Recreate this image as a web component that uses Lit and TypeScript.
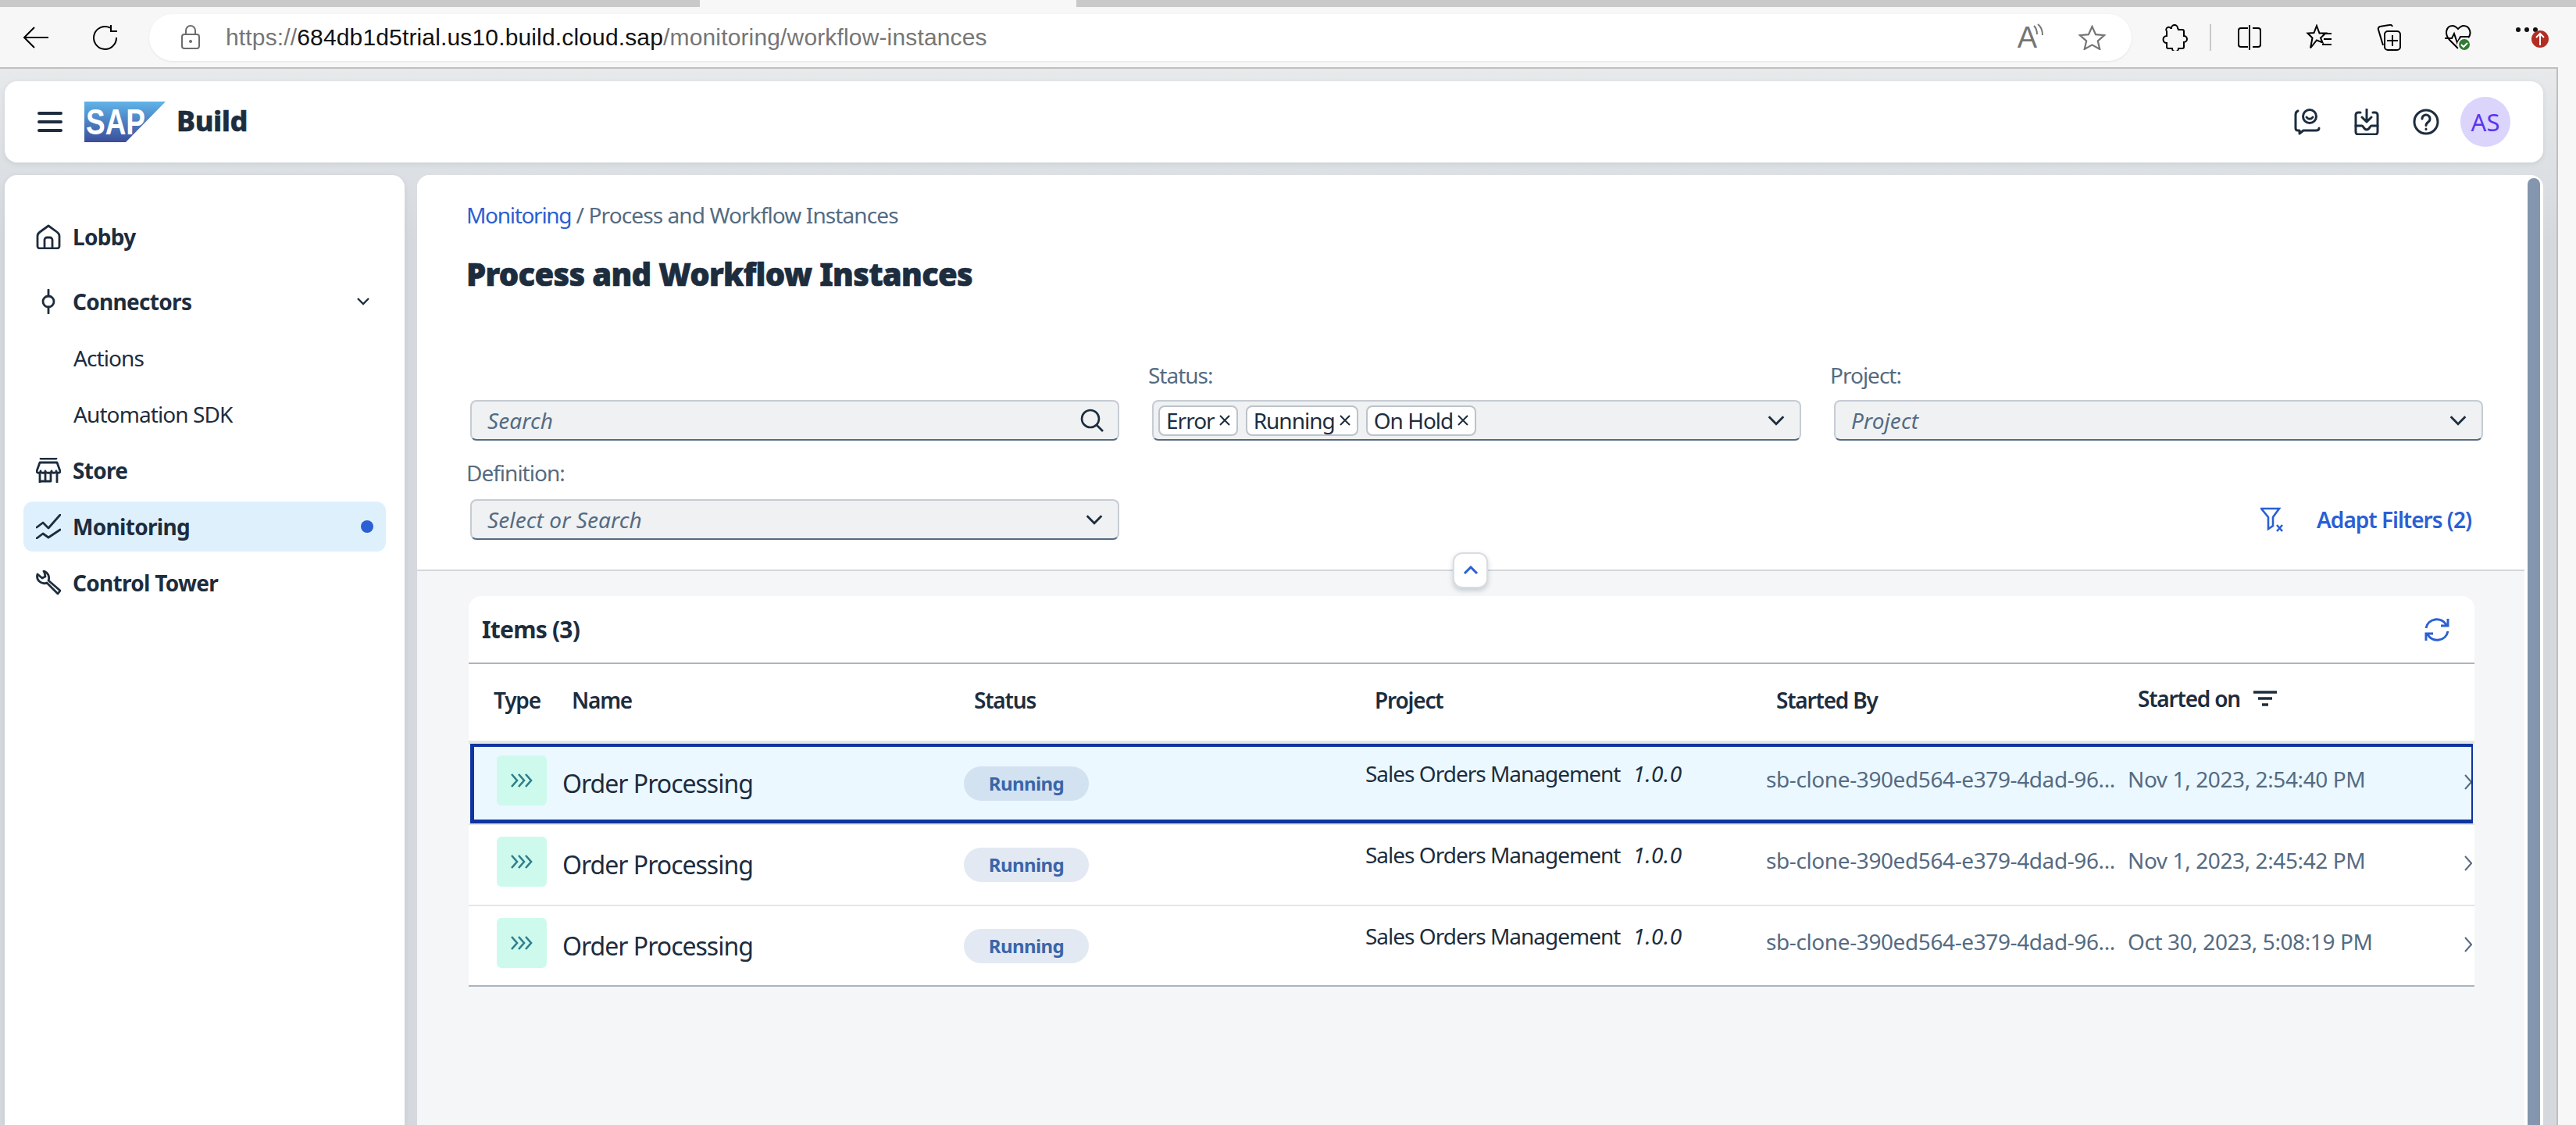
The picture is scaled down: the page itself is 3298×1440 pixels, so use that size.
import { LitElement, html, css } from 'lit';
import { customElement } from 'lit/decorators.js';

const rows = [
  { on: 'Nov 1, 2023, 2:54:40 PM', selected: true },
  { on: 'Nov 1, 2023, 2:45:42 PM', selected: false },
  { on: 'Oct 30, 2023, 5:08:19 PM', selected: false },
];

const chevronDown = html`<svg class="chev" viewBox="0 0 20 12"><path d="M2 2l8 8 8-8" /></svg>`;

@customElement('app-root')
export class AppRoot extends LitElement {
  static override styles = css`
    * {
      box-sizing: border-box;
    }
    :host {
      display: block;
      width: 3298px;
      height: 1440px;
      overflow: hidden;
      background: #f7f7f7;
      color: #1d2d3e;
      font-family: 'Noto Sans', 'Open Sans', sans-serif;
      font-size: 28px;
    }
    svg {
      display: block;
      flex: none;
      fill: none;
      stroke: currentColor;
    }

    /* browser chrome */
    .tabs {
      display: flex;
      height: 9px;
      background: #c9c9c9;
    }
    .tab-a {
      width: 896px;
      border-bottom-right-radius: 8px;
      background: #c9c9c9;
    }
    .tab-b {
      width: 482px;
      background: #f7f7f7;
    }
    .tab-c {
      flex: 1;
      border-bottom-left-radius: 8px;
      background: #c9c9c9;
    }
    .toolbar {
      display: flex;
      align-items: center;
      height: 77px;
      padding-left: 29px;
      background: #f7f7f7;
      color: #000;
    }
    .back {
      width: 34px;
      height: 28px;
      stroke-width: 2;
    }
    .reload {
      width: 33px;
      height: 33px;
      margin-left: 55px;
      stroke-width: 2;
    }
    .url {
      display: flex;
      align-items: center;
      width: 2538px;
      height: 60px;
      margin-left: 40px;
      padding-left: 41px;
      border-radius: 30px;
      background: #fff;
      box-shadow: 0 1px 3px rgba(0, 0, 0, 0.08);
      color: #767676;
    }
    .lock {
      width: 24px;
      height: 31px;
      stroke-width: 2;
      color: #6c6c6c;
    }
    .url-text {
      margin-left: 33px;
      font-family: 'Liberation Sans', sans-serif;
      font-size: 30px;
      letter-spacing: 0.15px;
      white-space: nowrap;
    }
    .url-text b {
      font-weight: 400;
      color: #111;
    }
    .read {
      display: flex;
      align-items: flex-start;
      margin-left: auto;
      color: #757575;
      font-family: 'Liberation Sans', sans-serif;
      font-size: 38px;
      line-height: 44px;
    }
    .read svg {
      width: 14px;
      height: 18px;
      margin: 4px 0 0 -6px;
      stroke-width: 2;
    }
    .star {
      width: 35px;
      height: 32px;
      margin: 0 33px 0 45px;
      stroke-width: 2.2;
      color: #757575;
    }
    .tool {
      width: 34px;
      height: 34px;
      stroke-width: 2;
    }
    .puzzle {
      margin-left: 38px;
    }
    .sep {
      width: 2px;
      height: 34px;
      margin: 0 32px 0 28px;
      background: #c9c9c9;
    }
    .gap {
      margin-left: 55px;
    }
    .more {
      width: 44px;
      height: 30px;
      margin-left: 57px;
      stroke: none;
    }
    .more circle {
      stroke: none;
    }

    /* page */
    .page {
      display: flex;
      flex-direction: column;
      gap: 16px;
      width: 3275px;
      height: 1354px;
      padding: 16px 0 0 6px;
      border-top: 2px solid #bfbfbf;
      border-right: 2px solid #bfbfbf;
      background: linear-gradient(#e7e9eb, #d5d9de 220px);
    }
    .shell {
      display: flex;
      align-items: center;
      flex: none;
      width: 3250px;
      height: 104px;
      padding: 0 42px 0 42px;
      border-radius: 16px;
      background: #fff;
      box-shadow: 0 2px 6px rgba(85, 107, 130, 0.15);
    }
    .burger {
      width: 32px;
      height: 26px;
      stroke-width: 4;
      stroke-linecap: round;
    }
    .logo {
      width: 104px;
      height: 52px;
      margin-left: 28px;
      stroke: none;
    }
    .logo text {
      fill: #fff;
      stroke: none;
      font-family: 'Liberation Sans', sans-serif;
      font-weight: 700;
      font-size: 46px;
    }
    .product {
      margin: -3px 0 0 14px;
      font-size: 36px;
      font-weight: 800;
      letter-spacing: -0.4px;
      -webkit-text-stroke: 0.5px #1d2d3e;
    }
    .shell-icon {
      width: 34px;
      height: 34px;
      stroke-width: 3;
      stroke-linecap: round;
      stroke-linejoin: round;
    }
    .push {
      margin-left: auto;
    }
    .shell-gap {
      margin-left: 42px;
    }
    .avatar {
      display: flex;
      align-items: center;
      justify-content: center;
      width: 64px;
      height: 64px;
      margin-left: 27px;
      border-radius: 50%;
      background: #dbd4fb;
      color: #5a35f0;
      font-size: 31px;
    }

    .columns {
      display: flex;
      flex: 1;
      gap: 16px;
      min-height: 0;
    }

    /* side navigation */
    .side {
      flex: none;
      width: 512px;
      padding: 47px 24px 0;
      border-radius: 16px 16px 0 0;
      background: #fff;
      box-shadow: 0 2px 6px rgba(85, 107, 130, 0.15);
    }
    .nav {
      display: flex;
      align-items: center;
      height: 64px;
      margin-bottom: 8px;
      padding-left: 16px;
      border-radius: 12px;
      font-weight: 700;
      letter-spacing: -0.7px;
    }
    .nav.first {
      margin-bottom: 19px;
    }
    .nav svg.icon {
      width: 32px;
      height: 32px;
      margin-right: 15px;
      stroke-width: 2.8;
      stroke-linecap: round;
      stroke-linejoin: round;
    }
    .nav.sub {
      padding-left: 64px;
      font-weight: 400;
      letter-spacing: -0.9px;
    }
    .nav.active {
      background: #dff0fd;
    }
    .caret {
      width: 16px;
      height: 10px;
      margin-left: auto;
      margin-right: 21px;
      stroke-width: 2.4;
    }
    .dot {
      width: 16px;
      height: 16px;
      margin-left: auto;
      margin-right: 16px;
      border-radius: 50%;
      background: #2a60d3;
    }

    /* main card */
    .main {
      position: relative;
      display: flex;
      flex: none;
      width: 2722px;
      border-radius: 16px 16px 0 0;
      background: #fff;
      overflow: hidden;
    }
    .content {
      display: flex;
      flex-direction: column;
      width: 2698px;
    }
    .gutter {
      flex: 1;
      padding: 4px 4px 0 4px;
    }
    .thumb {
      width: 16px;
      height: 100%;
      border-radius: 8px 8px 0 0;
      background: #8496ad;
    }
    .head {
      position: relative;
      padding: 31px 0 38px 63px;
      border-bottom: 2px solid #d4d6d8;
      background: #fff;
    }
    .crumbs {
      line-height: 40px;
      color: #556b82;
      letter-spacing: -0.9px;
    }
    .crumbs a {
      color: #2a60d3;
      letter-spacing: -1.3px;
    }
    h1 {
      margin: 28px 0 81px;
      font-size: 40px;
      line-height: 56px;
      font-weight: 900;
      letter-spacing: -0.7px;
      -webkit-text-stroke: 0.7px #1d2d3e;
    }
    .filters {
      display: grid;
      grid-template-columns: repeat(3, 873px);
      row-gap: 21px;
    }
    .label {
      height: 40px;
      margin-bottom: 12px;
      line-height: 40px;
      color: #556b82;
      letter-spacing: -1px;
    }
    .label.low {
      margin-bottom: 14px;
    }
    .input {
      display: flex;
      align-items: center;
      width: 831px;
      height: 52px;
      margin-left: 5px;
      padding: 0 18px 0 20px;
      border: 2px solid #c6ccd3;
      border-bottom-color: #556b82;
      border-radius: 8px;
      background: #eff1f2;
      font-style: italic;
      color: #556b82;
      letter-spacing: 0.1px;
    }
    .input.tokens {
      gap: 10px;
      padding-left: 6px;
      font-style: normal;
      color: #1d2d3e;
      letter-spacing: -1px;
    }
    .input .chev,
    .input .lens {
      margin-left: auto;
      color: #1d2d3e;
    }
    .chev {
      width: 24px;
      height: 14px;
      stroke-width: 2.4;
    }
    .lens {
      width: 30px;
      height: 30px;
      stroke-width: 2.6;
    }
    .token {
      display: flex;
      align-items: center;
      gap: 6px;
      height: 39px;
      padding: 0 8px;
      border: 2px solid #bcc3ca;
      border-radius: 8px;
      background: #fff;
    }
    .token svg {
      width: 14px;
      height: 14px;
      stroke-width: 2;
    }
    .actions {
      display: flex;
      align-items: center;
      justify-content: flex-end;
      align-self: end;
      gap: 40px;
      height: 52px;
      padding-right: 52px;
      color: #2a60d3;
      font-weight: 600;
      letter-spacing: -1px;
    }
    .clear {
      width: 32px;
      height: 32px;
      stroke-width: 2.6;
    }
    .collapse {
      position: absolute;
      left: 1326px;
      bottom: -24px;
      display: flex;
      align-items: center;
      justify-content: center;
      width: 45px;
      height: 46px;
      border: 2px solid #d9dce0;
      border-radius: 12px;
      background: #fff;
      box-shadow: 0 3px 6px rgba(85, 107, 130, 0.3);
      color: #2a60d3;
    }
    .collapse svg {
      width: 20px;
      height: 12px;
      stroke-width: 3;
    }
    .body {
      flex: 1;
      padding: 32px 0 0 66px;
      background: #f5f6f7;
    }
    .table {
      width: 2568px;
      background: #fff;
      border-radius: 16px 16px 0 0;
      overflow: hidden;
    }
    .table-bar {
      display: flex;
      align-items: center;
      justify-content: space-between;
      height: 87px;
      padding: 0 32px 0 17px;
      border-bottom: 2px solid #a9b4be;
    }
    .table-title {
      font-size: 30px;
      font-weight: 700;
      letter-spacing: -0.8px;
    }
    .refresh {
      width: 32px;
      height: 32px;
      stroke-width: 3;
      color: #2a60d3;
    }
    .grid {
      display: grid;
      grid-template-columns: 120px 514px 514px 513px 463px 426px 1fr;
    }
    .thead {
      height: 102px;
      padding-bottom: 6px;
      align-items: center;
      border-bottom: 4px solid #e5e5e5;
      font-weight: 600;
      letter-spacing: -1.2px;
    }
    .thead .c1 {
      padding-left: 32px;
    }
    .thead .c2 {
      padding-left: 12px;
    }
    .thead .c3,
    .thead .c5,
    .thead .c6 {
      padding-left: 13px;
    }
    .thead .c4 {
      padding-left: 12px;
    }
    .sorted {
      display: flex;
      align-items: center;
      gap: 16px;
      margin-top: -4px;
    }
    .sort {
      width: 32px;
      height: 20px;
      stroke-width: 3.4;
    }
    .row {
      position: relative;
      height: 104px;
      align-items: start;
      border-bottom: 2px solid #e5e5e5;
      line-height: 40px;
      letter-spacing: -1px;
    }
    .row:last-child {
      height: 103px;
      border-bottom-color: #a9b4be;
    }
    .row.selected {
      background: #ebf8ff;
    }
    .row.selected::after {
      content: '';
      position: absolute;
      inset: 0 2px 0 2px;
      border: solid #0f34a0;
      border-width: 4px 2px 5px 5px;
    }
    .tile {
      display: flex;
      align-items: center;
      justify-content: center;
      width: 64px;
      height: 64px;
      margin: 15px 0 0 36px;
      border-radius: 6px;
      background: #cdfaec;
      color: #2f7e8c;
    }
    .tile svg {
      width: 30px;
      height: 18px;
      stroke-width: 2.6;
    }
    .name {
      padding-top: 31px;
      font-size: 32px;
      letter-spacing: -1px;
    }
    .pill {
      display: flex;
      align-items: center;
      justify-content: center;
      width: 160px;
      height: 44px;
      margin-top: 29px;
      border-radius: 22px;
      background: #e2e9f3;
      color: #3a65a8;
      font-size: 24px;
      font-weight: 700;
      letter-spacing: -0.6px;
    }
    .selected .pill {
      background: #d3e2f1;
    }
    .project {
      padding-top: 18px;
      white-space: pre;
    }
    .project i {
      margin-left: 16px;
      letter-spacing: 0.5px;
    }
    .muted {
      padding-top: 25px;
      color: #556b82;
      letter-spacing: -0.4px;
      white-space: nowrap;
    }
    .go {
      width: 10px;
      height: 20px;
      margin: 39px 0 0 5px;
      stroke-width: 2;
      color: #556b82;
    }
  `;

  render() {
    return html`
      <div class="tabs">
        <div class="tab-a"></div>
        <div class="tab-b"></div>
        <div class="tab-c"></div>
      </div>
      ${this.renderToolbar()}
      <div class="page">
        ${this.renderShell()}
        <div class="columns">
          ${this.renderSide()}
          <div class="main">
            <div class="content">
              ${this.renderHead()}
              <div class="body">${this.renderTable()}</div>
            </div>
            <div class="gutter"><div class="thumb"></div></div>
          </div>
        </div>
      </div>
    `;
  }

  renderToolbar() {
    return html`
      <div class="toolbar">
        <svg class="back" viewBox="0 0 34 28"><path d="M33 14H2M15 1L2 14l13 13" /></svg>
        <svg class="reload" viewBox="0 0 33 33">
          <path d="M23 4.500A14.500 14.500 0 1 0 31 17M24 1v8h8" />
        </svg>
        <div class="url">
          <svg class="lock" viewBox="0 0 24 31">
            <rect x="1" y="12" width="22" height="18" rx="3" />
            <path d="M6 12V7a6 6 0 0 1 12 0v5" />
            <circle cx="12" cy="21" r="1" />
          </svg>
          <span class="url-text"
            >https://<b>684db1d5trial.us10.build.cloud.sap</b>/monitoring/workflow-instances</span
          >
          <span class="read"
            >A<svg viewBox="0 0 14 18"><path d="M2 3c3 3 4 6 4 11M7 1c4 3 6 8 6 14" /></svg></span
          >
          <svg class="star" viewBox="0 0 35 32">
            <path d="M17.500 2l4.600 10.200 11 1-8.300 7.300 2.500 10.500-9.800-5.600-9.800 5.600 2.500-10.500L1.900 13.200l11-1z" />
          </svg>
        </div>
        <svg class="tool puzzle" viewBox="0 0 34 34">
          <path
            d="M12 5h1a4 4 0 0 1 8 0 4 4 0 0 1 1 2h5a2 2 0 0 1 2 2v6a4 4 0 0 1 0 8v6a2 2 0 0 1-2 2h-5a4 4 0 0 1-8 0H9a2 2 0 0 1-2-2v-5a4.500 4.500 0 0 1 0-9V9a3 3 0 0 1 5-4z"
          />
        </svg>
        <div class="sep"></div>
        <svg class="tool" viewBox="0 0 34 34">
          <path d="M15 5H6a3 3 0 0 0-3 3v18a3 3 0 0 0 3 3h9M21 5h7a3 3 0 0 1 3 3v18a3 3 0 0 1-3 3h-7M17 1v32" />
        </svg>
        <svg class="tool gap" viewBox="0 0 34 34">
          <path d="M14 2l3.500 9.500h8l-6.500 6 2.500 6-7.500-3-8 10 2.500-13-6-6 8-.5zM21 12h12M23 19h10M21 26h12" />
        </svg>
        <svg class="tool gap" viewBox="0 0 34 34">
          <path d="M10 27L4 7a3 3 0 0 1 2-4l12-2a3 3 0 0 1 4 2" />
          <rect x="12" y="9" width="20" height="24" rx="4" />
          <path d="M22 14v14M15 21h14" />
        </svg>
        <svg class="tool gap" viewBox="0 0 34 34">
          <path d="M17 31L6 20C-1 12 2 2 10 2c3 0 5 2 7 4 2-2 4-4 7-4 8 0 11 10 6 15" />
          <path d="M0 18h9l3-6 4 12 4-8h12" />
          <circle cx="25" cy="26" r="8" fill="#2f7d2f" stroke="#f7f7f7" />
          <path d="M21 26l3 3 5-5" stroke="#fff" />
        </svg>
        <svg class="more" viewBox="0 0 44 30">
          <circle cx="3" cy="5" r="3" fill="#111" />
          <circle cx="14" cy="5" r="3" fill="#111" />
          <circle cx="25" cy="5" r="3" fill="#111" />
          <ellipse cx="31" cy="17" rx="11" ry="11" fill="#b32d22" />
          <path d="M31 25V10M26 15l5-5 5 5" stroke="#fff" stroke-width="2" />
        </svg>
      </div>
    `;
  }

  renderShell() {
    return html`
      <div class="shell">
        <svg class="burger" viewBox="0 0 32 26"><path d="M2 2h28M2 13h28M2 24h28" /></svg>
        <svg class="logo" viewBox="0 0 104 52">
          <defs>
            <linearGradient id="sap" x1="0" y1="0" x2="0" y2="1">
              <stop offset="0" stop-color="#5fb4e8" />
              <stop offset="1" stop-color="#3b4d9a" />
            </linearGradient>
          </defs>
          <polygon points="0,0 104,0 53,52 0,52" fill="url(#sap)" />
          <text x="2" y="42" textLength="76" lengthAdjust="spacingAndGlyphs">SAP</text>
        </svg>
        <span class="product">Build</span>
        <svg class="shell-icon push" viewBox="0 0 34 34">
          <circle cx="20" cy="10" r="8.500" />
          <path d="M16 11c2 3 6 3 8 0" />
          <path d="M5 3C2 4 2 6 2 8v17c0 2 1 3 3 3h2v4l5-4h16c3 0 4-1 4-3" />
        </svg>
        <svg class="shell-icon shell-gap" viewBox="0 0 34 34">
          <path d="M9 5H6a3 3 0 0 0-3 3v22a3 3 0 0 0 3 3h22a3 3 0 0 0 3-3V8a3 3 0 0 0-3-3h-3" />
          <path d="M17 1v15M11 11l6 6 6-6M3 22h8c2 0 2 5 6 5s4-5 6-5h8" />
        </svg>
        <svg class="shell-icon shell-gap" viewBox="0 0 34 34">
          <circle cx="17" cy="17" r="15" />
          <path d="M12 13a5 5 0 1 1 8 4c-2 1.500-3 2.500-3 4.500M17 26v.5" />
        </svg>
        <div class="avatar">AS</div>
      </div>
    `;
  }

  renderSide() {
    return html`
      <nav class="side">
        <div class="nav first">
          <svg class="icon" viewBox="0 0 32 32">
            <path d="M16 2L5 10c-2 1.500-3 3-3 5v13a3 3 0 0 0 3 3h22a3 3 0 0 0 3-3V15c0-2-1-3.500-3-5zM11 31V20a3 3 0 0 1 3-3h4a3 3 0 0 1 3 3v11" />
          </svg>
          Lobby
        </div>
        <div class="nav">
          <svg class="icon" viewBox="0 0 32 32">
            <circle cx="16" cy="16" r="7" />
            <path d="M16 1v8M16 23v8" />
          </svg>
          Connectors
          <svg class="caret" viewBox="0 0 16 10"><path d="M1 1l7 7 7-7" /></svg>
        </div>
        <div class="nav sub">Actions</div>
        <div class="nav sub">Automation SDK</div>
        <div class="nav">
          <svg class="icon" viewBox="0 0 32 32">
            <path d="M6 1h20M5 6h22l4 11c0 3-5 3-5 0 0 3-6 3-6 0 0 3-8 3-8 0 0 3-6 3-6 0 0 3-5 3-5 0zM5 21v10M27 21v10M5 30h14V20M12 30V21" />
          </svg>
          Store
        </div>
        <div class="nav active">
          <svg class="icon" viewBox="0 0 32 32">
            <path d="M1 17l8-6 7 7L31 1M1 31l8-6 7 5 15-10" />
          </svg>
          Monitoring
          <span class="dot"></span>
        </div>
        <div class="nav">
          <svg class="icon" viewBox="0 0 32 32">
            <path d="M10 1a9 9 0 0 1 6 12l15 13-3 4-14-14A9 9 0 0 1 2 5l6 5 4-2-1-5z" />
          </svg>
          Control Tower
        </div>
      </nav>
    `;
  }

  renderHead() {
    return html`
      <div class="head">
        <div class="crumbs"><a>Monitoring</a> / Process and Workflow Instances</div>
        <h1>Process and Workflow Instances</h1>
        <div class="filters">
          <div>
            <div class="label"></div>
            <div class="input">
              Search
              <svg class="lens" viewBox="0 0 30 30">
                <circle cx="13" cy="13" r="11" />
                <path d="M21 21l8 8" />
              </svg>
            </div>
          </div>
          <div>
            <div class="label">Status:</div>
            <div class="input tokens">
              ${['Error', 'Running', 'On Hold'].map(
                t => html`<span class="token"
                  >${t}<svg viewBox="0 0 14 14"><path d="M1 1l12 12M13 1L1 13" /></svg></span
                >`
              )}
              ${chevronDown}
            </div>
          </div>
          <div>
            <div class="label">Project:</div>
            <div class="input">Project ${chevronDown}</div>
          </div>
          <div>
            <div class="label low">Definition:</div>
            <div class="input">Select or Search ${chevronDown}</div>
          </div>
          <div></div>
          <div class="actions">
            <svg class="clear" viewBox="0 0 32 32">
              <path d="M1 2h23l-8 11v11l-6 4V13zM21 23l7 8M28 23l-7 8" />
            </svg>
            Adapt Filters (2)
          </div>
        </div>
        <div class="collapse"><svg viewBox="0 0 20 12"><path d="M2 10l8-8 8 8" /></svg></div>
      </div>
    `;
  }

  renderTable() {
    return html`
      <div class="table">
        <div class="table-bar">
          <span class="table-title">Items (3)</span>
          <svg class="refresh" viewBox="0 0 32 32">
            <path d="M2 14A14 14 0 0 1 28 10M30 2v9h-9M30 18A14 14 0 0 1 4 22M2 30v-9h9" />
          </svg>
        </div>
        <div class="grid thead">
          <span class="c1">Type</span>
          <span class="c2">Name</span>
          <span class="c3">Status</span>
          <span class="c4">Project</span>
          <span class="c5">Started By</span>
          <span class="c6 sorted">
            Started on
            <svg class="sort" viewBox="0 0 32 20"><path d="M1 2h30M7 10h18M12 18h8" /></svg>
          </span>
          <span></span>
        </div>
        ${rows.map(
          r => html`
            <div class="grid row ${r.selected ? 'selected' : ''}">
              <div class="tile">
                <svg viewBox="0 0 30 18"><path d="M2 1l7 8-7 8M11 1l7 8-7 8M20 1l7 8-7 8" /></svg>
              </div>
              <div class="name">Order Processing</div>
              <div><div class="pill">Running</div></div>
              <div class="project">Sales Orders Management<i>1.0.0</i></div>
              <div class="muted">sb-clone-390ed564-e379-4dad-96...</div>
              <div class="muted">${r.on}</div>
              <svg class="go" viewBox="0 0 10 20"><path d="M1 1l8 9-8 9" /></svg>
            </div>
          `
        )}
      </div>
    `;
  }
}
